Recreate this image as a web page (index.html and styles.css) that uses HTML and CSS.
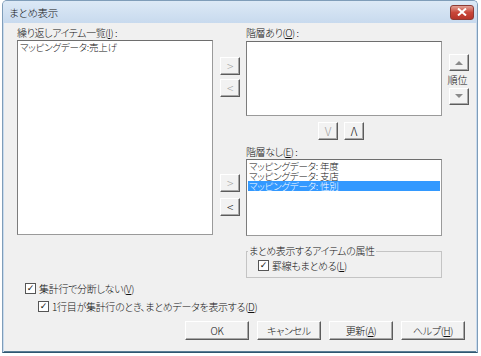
FILE: index.html
```html
<!DOCTYPE html>
<html lang="ja">
<head>
    <meta charset="UTF-8">
    <title>まとめ表示</title>
    <link rel="stylesheet" href="styles.css">
</head>
<body>
    <div class="window">
        <div class="titlebar">
            <span class="title">まとめ表示</span>
            <span class="close">
                <svg width="10" height="8" viewBox="0 0 10 8"><path d="M1 0.5 L9 7.5 M9 0.5 L1 7.5" stroke="#fff" stroke-width="2"/></svg>
            </span>
        </div>
        <div class="client">
            <div class="main">
                <div class="col-left">
                    <div class="label">繰り返しアイテム一覧(<u>I</u>) :</div>
                    <div class="listbox tall">
                        <div class="item">マッピングデータ:売上げ</div>
                    </div>
                </div>
                <div class="col-mid">
                    <button class="btn small disabled first">&gt;</button>
                    <button class="btn small disabled">&lt;</button>
                    <button class="btn small disabled third">&gt;</button>
                    <button class="btn small">&lt;</button>
                </div>
                <div class="col-right">
                    <div class="label">階層あり(<u>O</u>) :</div>
                    <div class="listbox upper"></div>
                    <div class="updown">
                        <button class="btn small disabled">V</button>
                        <button class="btn small">Λ</button>
                    </div>
                    <div class="label">階層なし(<u>E</u>) :</div>
                    <div class="listbox lower">
                        <div class="item">マッピングデータ: 年度</div>
                        <div class="item">マッピングデータ: 支店</div>
                        <div class="item selected">マッピングデータ: 性別</div>
                    </div>
                    <fieldset class="group">
                        <legend>まとめ表示するアイテムの属性</legend>
                        <label class="check"><span class="box">&#10003;</span>罫線もまとめる(<u>L</u>)</label>
                    </fieldset>
                </div>
                <div class="col-order">
                    <button class="btn arrow"><svg width="8" height="5" viewBox="0 0 8 5"><path d="M0 5 L4 1 L8 5 Z" fill="#8a8a8a"/></svg></button>
                    <div class="order-label">順位</div>
                    <button class="btn arrow"><svg width="8" height="5" viewBox="0 0 8 5"><path d="M0 0 L4 4 L8 0 Z" fill="#8a8a8a"/></svg></button>
                </div>
            </div>
            <div class="options">
                <label class="check"><span class="box">&#10003;</span>集計行で分断しない(<u>V</u>)</label>
                <label class="check indent"><span class="box">&#10003;</span>1行目が集計行のとき、まとめデータを表示する(<u>D</u>)</label>
            </div>
            <div class="actions">
                <button class="btn wide">OK</button>
                <button class="btn wide">キャンセル</button>
                <button class="btn wide">更新(<u>A</u>)</button>
                <button class="btn wide">ヘルプ(<u>H</u>)</button>
            </div>
        </div>
    </div>
</body>
</html>
```

FILE: styles.css
```css
body {
    margin: 0;
    background-color: #ffffff;
    font-family: "Noto Sans CJK JP", "Noto Sans", sans-serif;
    font-size: 10px;
    font-weight: 300;
    color: #111;
}

u {
    text-decoration: underline;
    text-underline-offset: 1px;
}

.window {
    margin-left: 2px;
    width: 474px;
    height: 351px;
    border: 1px solid #7f9db9;
    border-bottom-color: #2f5670;
    border-radius: 5px 5px 0 0;
    background-color: #c9dbee;
    overflow: hidden;
}

.titlebar {
    height: 22px;
    display: flex;
    align-items: center;
    justify-content: space-between;
    padding: 0 3px 0 6px;
    background: linear-gradient(to bottom, #dce9f6, #c8daee);
}

.title {
    font-size: 10.5px;
    letter-spacing: -0.3px;
    font-feature-settings: "palt";
}

.close {
    width: 22px;
    height: 13px;
    display: flex;
    align-items: center;
    justify-content: center;
    border: 1px solid #8d3b35;
    border-radius: 3px;
    background: linear-gradient(to bottom, #e2a195, #c9473a 50%, #b6352a);
}

.client {
    margin: 0 1px;
    height: 328px;
    background-color: #f0f0f0;
    border-bottom: 1px solid #5a7d95;
}

.main {
    display: flex;
    padding: 3px 0 0 13px;
}

.label {
    height: 14px;
    line-height: 14px;
    font-feature-settings: "palt";
    letter-spacing: -0.4px;
    white-space: nowrap;
}

.col-left {
    width: 196px;
}

.listbox {
    background-color: #fff;
    border: 1px solid #9a9a9a;
    border-top-color: #6e6e6e;
    border-left-color: #7c7c7c;
    box-sizing: border-box;
    padding: 1px 1px;
}

.listbox.tall {
    height: 195px;
}

.listbox.upper {
    height: 75px;
    margin-top: 1px;
}

.listbox.lower {
    height: 77px;
}

.item {
    height: 10px;
    line-height: 10px;
    padding-left: 1px;
    font-size: 9.5px;
    font-feature-settings: "palt";
    white-space: nowrap;
    letter-spacing: -0.2px;
}

.item.selected {
    background-color: #3399ff;
    color: #fff;
}

.col-mid {
    width: 20px;
    margin-left: 7px;
    display: flex;
    flex-direction: column;
}

.btn {
    font-family: inherit;
    font-size: 10px;
    font-weight: 300;
    color: #111;
    background-color: #f2f2f2;
    border: 1px solid;
    border-color: #ffffff #5c5c5c #5c5c5c #ffffff;
    box-shadow: inset -1px -1px 0 #a8a8a8;
    padding: 0;
    margin: 0;
    font-feature-settings: "palt";
    letter-spacing: -0.3px;
}

.btn.small {
    width: 20px;
    height: 18px;
    line-height: 14px;
    margin-bottom: 4px;
    font-size: 12px;
}

.btn.disabled {
    color: #a0a0a0;
}

.btn.first {
    margin-top: 31px;
}

.btn.third {
    margin-top: 73px;
    margin-bottom: 6px;
}

.col-right {
    width: 196px;
    margin-left: 6px;
}

.updown {
    display: flex;
    gap: 6px;
    justify-content: center;
    margin: 6px 0 5px 0;
    padding-right: 6px;
}

.updown .btn.small {
    margin-bottom: 0;
}

.group {
    margin: 9px 0 0 0;
    padding: 0 0 6px 11px;
    border: 1px solid #c4c4c4;
    height: 33px;
    box-sizing: border-box;
    min-width: 0;
}

.group legend {
    padding: 0 1px;
    margin-left: -10px;
    font-feature-settings: "palt";
    letter-spacing: -0.4px;
    line-height: 12px;
}

.check {
    display: flex;
    align-items: center;
    height: 16px;
    white-space: nowrap;
    font-feature-settings: "palt";
    letter-spacing: -0.3px;
}

.box {
    width: 9px;
    height: 9px;
    border: 1px solid #555;
    background-color: #fff;
    margin-right: 3px;
    font-size: 9px;
    line-height: 9px;
    text-align: center;
    font-weight: bold;
    font-family: "DejaVu Sans", sans-serif;
    letter-spacing: 0;
}

.col-order {
    margin-left: 7px;
    width: 20px;
    padding-top: 28px;
    display: flex;
    flex-direction: column;
    align-items: center;
}

.btn.arrow {
    width: 20px;
    height: 17px;
    display: flex;
    align-items: center;
    justify-content: center;
}

.order-label {
    height: 17px;
    line-height: 17px;
    white-space: nowrap;
    margin-left: -3px;
}

.options {
    padding: 2px 0 0 21px;
    display: flex;
    flex-direction: column;
    gap: 2px;
}

.check.indent {
    margin-left: 13px;
}

.actions {
    display: flex;
    justify-content: flex-end;
    gap: 8px;
    padding: 7px 11px 0 0;
}

.btn.wide {
    width: 64px;
    height: 19px;
    line-height: 15px;
}
```
